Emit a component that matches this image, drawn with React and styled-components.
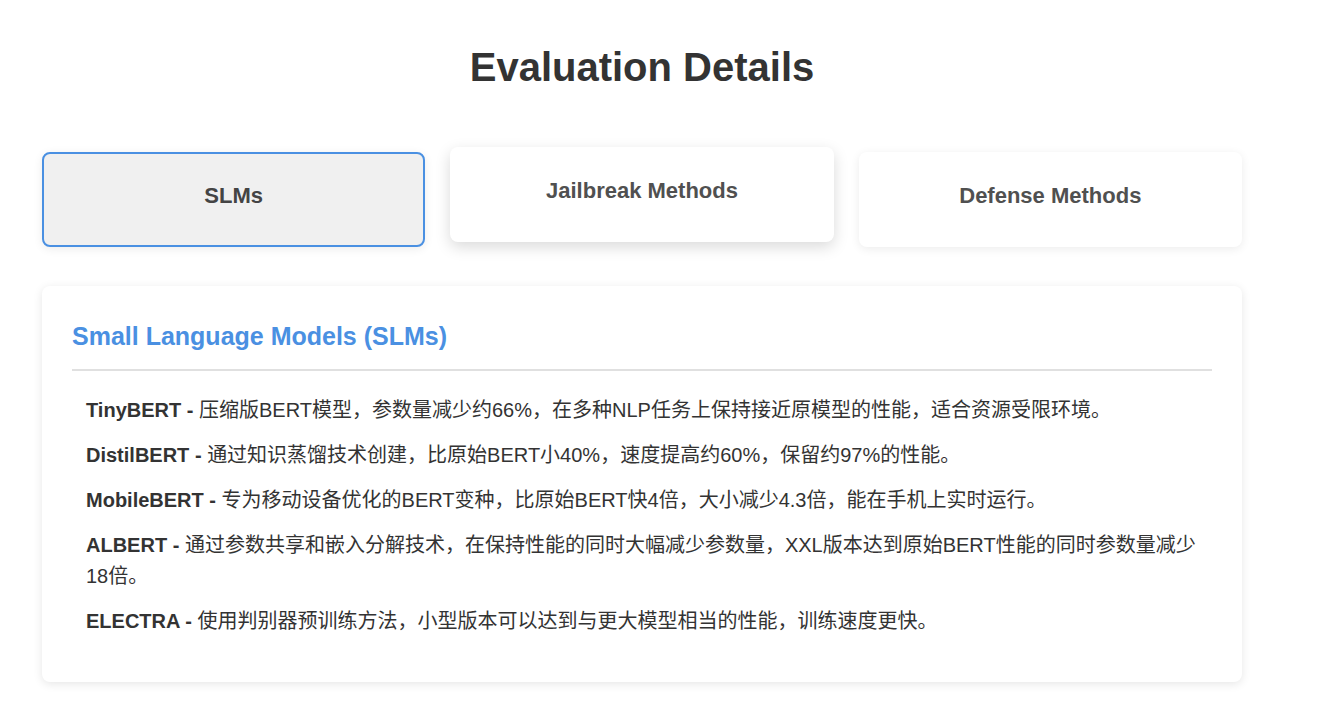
import React from 'react'
import styled, { createGlobalStyle } from 'styled-components'

const GlobalStyle = createGlobalStyle`
  body {
    margin: 0;
    background: #fff;
    font-family: 'Liberation Sans', Arial, 'Noto Sans CJK SC', sans-serif;
    color: #333;
  }
`

const models = [
  { name: 'TinyBERT', desc: '压缩版BERT模型，参数量减少约66%，在多种NLP任务上保持接近原模型的性能，适合资源受限环境。' },
  { name: 'DistilBERT', desc: '通过知识蒸馏技术创建，比原始BERT小40%，速度提高约60%，保留约97%的性能。' },
  { name: 'MobileBERT', desc: '专为移动设备优化的BERT变种，比原始BERT快4倍，大小减少4.3倍，能在手机上实时运行。' },
  { name: 'ALBERT', desc: '通过参数共享和嵌入分解技术，在保持性能的同时大幅减少参数量，XXL版本达到原始BERT性能的同时参数量减少18倍。' },
  { name: 'ELECTRA', desc: '使用判别器预训练方法，小型版本可以达到与更大模型相当的性能，训练速度更快。' },
]

const tabs = ['SLMs', 'Jailbreak Methods', 'Defense Methods']

const App = () => {
  return (
    <>
      <GlobalStyle />
      <Page>
        <Title>Evaluation Details</Title>
        <Tabs>
          {tabs.map((t, i) => (
            <Tab key={t} $active={i === 0} $hover={i === 1}>{t}</Tab>
          ))}
        </Tabs>
        <Card>
          <SectionTitle>Small Language Models (SLMs)</SectionTitle>
          <List>
            {models.map(m => (
              <Item key={m.name}>
                <strong>{m.name} -</strong> {m.desc}
              </Item>
            ))}
          </List>
        </Card>
      </Page>
    </>
  )
}

const Page = styled.div`
  width: 1200px;
  padding: 43px 0 20px 42px;
`

const Title = styled.h1`
  margin: 0 0 61px;
  text-align: center;
  font-size: 40px;
  line-height: 48px;
  font-weight: 700;
  color: #333;
`

const Tabs = styled.div`
  display: grid;
  grid-template-columns: repeat(3, 1fr);
  gap: 25px;
  margin-bottom: 39px;
`

const Tab = styled.div`
  box-sizing: border-box;
  height: 95px;
  padding-bottom: 7px;
  display: flex;
  align-items: center;
  justify-content: center;
  border-radius: 8px;
  font-size: 22px;
  font-weight: 700;
  color: ${p => (p.$active ? '#444' : '#505050')};
  background: ${p => (p.$active ? '#f0f0f0' : '#fff')};
  border: 2px solid ${p => (p.$active ? '#4a90e2' : 'transparent')};
  box-shadow: ${p => (p.$hover ? '0 5px 15px rgba(0,0,0,0.15)' : '0 2px 10px rgba(0,0,0,0.08)')};
  transform: ${p => (p.$hover ? 'translateY(-5px)' : 'none')};
  cursor: pointer;
`

const Card = styled.div`
  background: #fff;
  border-radius: 8px;
  padding: 30px 30px 31px;
  box-shadow: 0 2px 10px rgba(0,0,0,0.1);
`

const SectionTitle = styled.h3`
  margin: 6px 0 0;
  padding-bottom: 18px;
  border-bottom: 2px solid #e0e0e0;
  font-size: 25px;
  line-height: 29px;
  font-weight: 700;
  color: #4a90e2;
`

const List = styled.ul`
  list-style: none;
  margin: 24px 0 0;
  padding: 0 0 0 14px;
`

const Item = styled.li`
  font-size: 20px;
  line-height: 31px;
  margin-bottom: 14px;
  color: #333;

  strong {
    font-weight: 700;
  }
`

export default App
